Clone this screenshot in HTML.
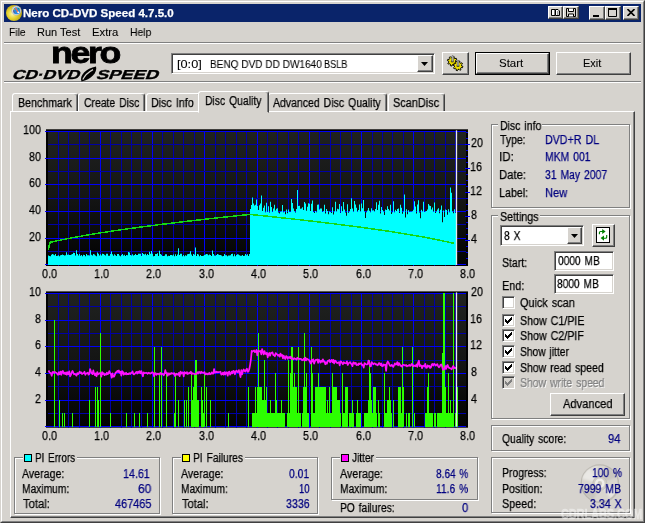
<!DOCTYPE html>
<html>
<head>
<meta charset="utf-8">
<title>Nero CD-DVD Speed 4.7.5.0</title>
<style>
html,body{margin:0;padding:0;}
body{width:645px;height:523px;overflow:hidden;background:#d6d3ce;font-family:"Liberation Sans",sans-serif;font-size:12.5px;color:#000;position:relative;}
.a{position:absolute;}
.t{position:absolute;white-space:nowrap;line-height:16px;height:16px;transform-origin:0 50%;z-index:4;will-change:transform;-webkit-text-stroke:0.25px;}
#frame{left:0;top:0;width:643px;height:521px;border:1px solid;border-color:#d6d3ce #404040 #404040 #d6d3ce;}
#frame2{left:1px;top:1px;width:641px;height:519px;border:1px solid;border-color:#fff #808080 #808080 #fff;}
#title{left:4px;top:4px;width:637px;height:18px;background:#0a246a;}
.cap{position:absolute;top:2px;width:16px;height:14px;background:#d6d3ce;border:1px solid;border-color:#fff #404040 #404040 #fff;box-shadow:inset -1px -1px 0 #808080;box-sizing:border-box;}
.etch{position:absolute;height:1px;background:#808080;border-bottom:1px solid #fff;}
.btn{position:absolute;background:#d6d3ce;border:1px solid;border-color:#fff #404040 #404040 #fff;box-shadow:inset -1px -1px 0 #808080;box-sizing:border-box;}
.sunk{position:absolute;background:#fff;border:1px solid;border-color:#808080 #fff #fff #808080;box-shadow:inset 1px 1px 0 #404040, inset -1px -1px 0 #d6d3ce;box-sizing:border-box;}
.grp{position:absolute;border:1px solid #808080;box-shadow:1px 1px 0 #fff, inset 1px 1px 0 #fff;box-sizing:border-box;}
.lg{position:absolute;background:#d6d3ce;height:13px;}
.tab{position:absolute;top:93px;height:19px;box-sizing:border-box;border:1px solid;border-color:#fff #404040 transparent #fff;border-radius:3px 3px 0 0;box-shadow:inset -1px 0 0 #808080;background:#d6d3ce;}
.tab.sel{top:91px;height:22px;z-index:3;}
.chk{position:absolute;width:13px;height:13px;background:#fff;border:1px solid;border-color:#808080 #fff #fff #808080;box-shadow:inset 1px 1px 0 #404040, inset -1px -1px 0 #d6d3ce;box-sizing:border-box;}
.chk svg{position:absolute;left:-1px;top:-1px;}
.sq{position:absolute;width:6px;height:6px;border:1px solid #000;}
</style>
</head>
<body>
<div class="a" id="frame"></div>
<div class="a" id="frame2"></div>

<!-- title bar -->
<div class="a" id="title">
  <svg class="a" style="left:1px;top:0px" width="20" height="18" viewBox="0 0 20 18">
    <defs><radialGradient id="dg" cx="40%" cy="55%" r="60%"><stop offset="0" stop-color="#fff6a8"/><stop offset="0.5" stop-color="#e6d430"/><stop offset="1" stop-color="#b8a010"/></radialGradient></defs>
    <circle cx="9" cy="9" r="8" fill="url(#dg)"/>
    <circle cx="11.4" cy="6.6" r="4.6" fill="#e4e6ee" stroke="#a8acb8" stroke-width="0.7"/>
    <circle cx="11.6" cy="6.7" r="3.5" fill="#2a8ce0"/>
    <path d="M13 3.6L14.8 5L13.6 5.6Z" fill="#209030"/>
    <path d="M8.4 5.6L9.6 8.8L8.8 8.4Z" fill="#b01010"/>
    <path d="M10.4 3.8L13.2 8.6" stroke="#ff7040" stroke-width="1.2"/>
    <circle cx="13.3" cy="8.3" r="0.9" fill="#fff"/>
    <circle cx="8.8" cy="5.3" r="0.6" fill="#ffe000"/>
  </svg>
  <div class="cap" style="left:544px;width:15px;height:13px"><svg class="a" style="left:1px;top:1px" width="11" height="9" viewBox="0 0 11 9"><path d="M1.5 1.5h3.5v6h-3.5zM5.5 1.5h2.5l1.5 1.5v4.5h-4z" fill="#fff" stroke="#000" stroke-width="1"/><path d="M7 4h1.5M7 6h1.5" stroke="#000" stroke-width="0.8"/></svg></div>
  <div class="cap" style="left:559px;width:16px;height:13px"><svg class="a" style="left:2px;top:1px" width="10" height="9" viewBox="0 0 10 9"><path d="M0.5 0.5h9v8h-9z" fill="#d6d3ce" stroke="#000" stroke-width="1"/><path d="M2.5 0.5v3h5v-3M2.5 8.5v-2.5h5v2.5" fill="#fff" stroke="#000" stroke-width="1"/></svg></div>
  <div class="cap" style="left:585px"><svg class="a" style="left:3px;top:8px" width="6" height="2"><rect width="6" height="2" fill="#000"/></svg></div>
  <div class="cap" style="left:601px"><svg class="a" style="left:2px;top:1px" width="9" height="9"><path d="M0.5 1h8v7.5h-8z" fill="none" stroke="#000" stroke-width="1"/><rect width="9" height="2" fill="#000"/></svg></div>
  <div class="cap" style="left:619px"><svg class="a" style="left:3px;top:2px" width="8" height="7" viewBox="0 0 8 7"><path d="M0.5 0L7.5 7M7.5 0L0.5 7" stroke="#000" stroke-width="1.6" fill="none"/></svg></div>
</div>

<div class="etch" style="left:4px;top:42px;width:637px"></div>
<div class="etch" style="left:4px;top:81px;width:637px"></div>

<!-- logo -->
<div class="a" id="nero" style="left:51px;top:37.7px;font-size:30px;font-weight:bold;line-height:30px;height:30px;letter-spacing:-2px;-webkit-text-stroke:0.8px #000;white-space:nowrap;transform:scaleX(1.19);transform-origin:0 0;will-change:transform;">nero</div>
<svg class="a" style="left:12px;top:66px;will-change:transform" width="150" height="16" viewBox="0 0 150 16">
  <g transform="skewX(-22)" font-family="Liberation Sans, sans-serif" font-weight="bold" font-size="13" fill="#000" stroke="#000" stroke-width="0.35">
    <text x="4.7" y="13.1" textLength="67.5" lengthAdjust="spacingAndGlyphs">CD·DVD</text>
    <text x="88.9" y="13.1" textLength="62" lengthAdjust="spacingAndGlyphs">SPEED</text>
  </g>
  <path d="M69.5 15.4C67 10 74 2.5 84 0.6C85.7 6.5 79 14 69.5 15.4Z" fill="#000"/>
  <path d="M70.8 13.6C72.5 10 76.5 6 81 3.6" stroke="#d6d3ce" stroke-width="1.2" fill="none"/>
</svg>

<!-- drive combo -->
<div class="sunk" style="left:171px;top:53px;width:264px;height:21px"></div>
<div class="btn" style="left:417px;top:55px;width:16px;height:17px"></div>
<svg class="a" style="left:421px;top:62px" width="7" height="4"><path d="M0 0H7L3.5 4Z" fill="#000"/></svg>

<!-- gear button -->
<div class="btn" style="left:442px;top:52px;width:27px;height:23px"></div>
<svg class="a" style="left:444px;top:53px" width="24" height="21" viewBox="0 0 24 21">
  <path d="M11.9 8.2L13.2 8.8L12.8 10.1L11.4 10.0L10.8 10.7L11.3 12.0L10.2 12.7L9.3 11.7L8.3 11.8L7.7 13.1L6.4 12.7L6.5 11.3L5.8 10.7L4.5 11.2L3.8 10.1L4.8 9.2L4.7 8.2L3.4 7.6L3.8 6.3L5.2 6.4L5.8 5.7L5.3 4.4L6.4 3.7L7.3 4.7L8.3 4.6L8.9 3.3L10.2 3.7L10.1 5.1L10.8 5.7L12.1 5.2L12.8 6.3L11.8 7.2Z" fill="#f0e000" stroke="#000" stroke-width="1" stroke-linejoin="round"/>
  <path d="M17.6 12.8L18.9 13.4L18.5 14.7L17.1 14.6L16.5 15.3L17.0 16.6L15.9 17.3L15.0 16.3L14.0 16.4L13.4 17.7L12.1 17.3L12.2 15.9L11.5 15.3L10.2 15.8L9.5 14.7L10.5 13.8L10.4 12.8L9.1 12.2L9.5 10.9L10.9 11.0L11.5 10.3L11.0 9.0L12.1 8.3L13.0 9.3L14.0 9.2L14.6 7.9L15.9 8.3L15.8 9.7L16.5 10.3L17.8 9.8L18.5 10.9L17.5 11.8Z" fill="#f0e000" stroke="#000" stroke-width="1" stroke-linejoin="round"/>
  <ellipse cx="8.3" cy="8.4" rx="1.6" ry="1.1" fill="#504800"/>
  <ellipse cx="14.0" cy="13.0" rx="1.6" ry="1.1" fill="#504800"/>
  <path d="M7.7 8.4V3.2L8.6 2.2L9.5 3.2V8.4Z" fill="#b0b0b0" stroke="#505050" stroke-width="0.5"/>
  <path d="M13.1 13.0V8.0L14.0 7.0L14.9 8.0V13.0Z" fill="#b0b0b0" stroke="#505050" stroke-width="0.5"/>
</svg>

<!-- start / exit -->
<div class="a" style="left:475px;top:52px;width:75px;height:23px;background:#000"></div>
<div class="btn" style="left:476px;top:53px;width:73px;height:21px"></div>
<div class="btn" style="left:556px;top:52px;width:75px;height:23px"></div>

<!-- tabs -->
<div class="tab" style="left:12px;width:66px"></div>
<div class="tab" style="left:78px;width:67px"></div>
<div class="tab" style="left:146px;width:55px"></div>
<div class="tab" style="left:268px;width:119px"></div>
<div class="tab" style="left:388px;width:57px"></div>
<!-- tab panel -->
<div class="a" style="left:10px;top:111px;width:623px;height:405px;border:1px solid;border-color:#fff #404040 #404040 #fff;box-shadow:inset -1px -1px 0 #808080;box-sizing:content-box"></div>
<div class="tab sel" style="left:198px;width:71px"></div>

<svg class="a" style="left:0;top:0" width="645" height="523" viewBox="0 0 645 523" shape-rendering="auto">
<defs><linearGradient id="c1g" x1="0" y1="0" x2="0" y2="1"><stop offset="0" stop-color="#202220"/><stop offset="0.5" stop-color="#141514"/><stop offset="1" stop-color="#020202"/></linearGradient></defs>
<rect x="46" y="129.3" width="422" height="136.7" fill="#000"/>
<rect x="48" y="131.3" width="418" height="133.7" fill="url(#c1g)"/>
<g shape-rendering="crispEdges">
<line x1="58.5" y1="131.3" x2="58.5" y2="266.0" stroke="#0000a6" stroke-width="1"/>
<line x1="68.5" y1="131.3" x2="68.5" y2="266.0" stroke="#0000a6" stroke-width="1"/>
<line x1="79.5" y1="131.3" x2="79.5" y2="266.0" stroke="#0000a6" stroke-width="1"/>
<line x1="89.5" y1="131.3" x2="89.5" y2="266.0" stroke="#0000a6" stroke-width="1"/>
<line x1="100.5" y1="131.3" x2="100.5" y2="266.0" stroke="#0000f8" stroke-width="1"/>
<line x1="110.5" y1="131.3" x2="110.5" y2="266.0" stroke="#0000a6" stroke-width="1"/>
<line x1="121.5" y1="131.3" x2="121.5" y2="266.0" stroke="#0000a6" stroke-width="1"/>
<line x1="131.5" y1="131.3" x2="131.5" y2="266.0" stroke="#0000a6" stroke-width="1"/>
<line x1="141.5" y1="131.3" x2="141.5" y2="266.0" stroke="#0000a6" stroke-width="1"/>
<line x1="152.5" y1="131.3" x2="152.5" y2="266.0" stroke="#0000f8" stroke-width="1"/>
<line x1="162.5" y1="131.3" x2="162.5" y2="266.0" stroke="#0000a6" stroke-width="1"/>
<line x1="173.5" y1="131.3" x2="173.5" y2="266.0" stroke="#0000a6" stroke-width="1"/>
<line x1="183.5" y1="131.3" x2="183.5" y2="266.0" stroke="#0000a6" stroke-width="1"/>
<line x1="194.5" y1="131.3" x2="194.5" y2="266.0" stroke="#0000a6" stroke-width="1"/>
<line x1="204.5" y1="131.3" x2="204.5" y2="266.0" stroke="#0000f8" stroke-width="1"/>
<line x1="215.5" y1="131.3" x2="215.5" y2="266.0" stroke="#0000a6" stroke-width="1"/>
<line x1="225.5" y1="131.3" x2="225.5" y2="266.0" stroke="#0000a6" stroke-width="1"/>
<line x1="236.5" y1="131.3" x2="236.5" y2="266.0" stroke="#0000a6" stroke-width="1"/>
<line x1="246.5" y1="131.3" x2="246.5" y2="266.0" stroke="#0000a6" stroke-width="1"/>
<line x1="257.5" y1="131.3" x2="257.5" y2="266.0" stroke="#0000f8" stroke-width="1"/>
<line x1="267.5" y1="131.3" x2="267.5" y2="266.0" stroke="#0000a6" stroke-width="1"/>
<line x1="277.5" y1="131.3" x2="277.5" y2="266.0" stroke="#0000a6" stroke-width="1"/>
<line x1="288.5" y1="131.3" x2="288.5" y2="266.0" stroke="#0000a6" stroke-width="1"/>
<line x1="298.5" y1="131.3" x2="298.5" y2="266.0" stroke="#0000a6" stroke-width="1"/>
<line x1="309.5" y1="131.3" x2="309.5" y2="266.0" stroke="#0000f8" stroke-width="1"/>
<line x1="319.5" y1="131.3" x2="319.5" y2="266.0" stroke="#0000a6" stroke-width="1"/>
<line x1="330.5" y1="131.3" x2="330.5" y2="266.0" stroke="#0000a6" stroke-width="1"/>
<line x1="340.5" y1="131.3" x2="340.5" y2="266.0" stroke="#0000a6" stroke-width="1"/>
<line x1="351.5" y1="131.3" x2="351.5" y2="266.0" stroke="#0000a6" stroke-width="1"/>
<line x1="361.5" y1="131.3" x2="361.5" y2="266.0" stroke="#0000f8" stroke-width="1"/>
<line x1="372.5" y1="131.3" x2="372.5" y2="266.0" stroke="#0000a6" stroke-width="1"/>
<line x1="382.5" y1="131.3" x2="382.5" y2="266.0" stroke="#0000a6" stroke-width="1"/>
<line x1="392.5" y1="131.3" x2="392.5" y2="266.0" stroke="#0000a6" stroke-width="1"/>
<line x1="403.5" y1="131.3" x2="403.5" y2="266.0" stroke="#0000a6" stroke-width="1"/>
<line x1="413.5" y1="131.3" x2="413.5" y2="266.0" stroke="#0000f8" stroke-width="1"/>
<line x1="424.5" y1="131.3" x2="424.5" y2="266.0" stroke="#0000a6" stroke-width="1"/>
<line x1="434.5" y1="131.3" x2="434.5" y2="266.0" stroke="#0000a6" stroke-width="1"/>
<line x1="445.5" y1="131.3" x2="445.5" y2="266.0" stroke="#0000a6" stroke-width="1"/>
<line x1="455.5" y1="131.3" x2="455.5" y2="266.0" stroke="#0000a6" stroke-width="1"/>
<line x1="45" y1="131.5" x2="466" y2="131.5" stroke="#0000f8" stroke-width="1"/>
<line x1="48" y1="144.5" x2="466" y2="144.5" stroke="#0000a6" stroke-width="1"/>
<line x1="45" y1="158.5" x2="466" y2="158.5" stroke="#0000f8" stroke-width="1"/>
<line x1="48" y1="171.5" x2="466" y2="171.5" stroke="#0000a6" stroke-width="1"/>
<line x1="45" y1="184.5" x2="466" y2="184.5" stroke="#0000f8" stroke-width="1"/>
<line x1="48" y1="198.5" x2="466" y2="198.5" stroke="#0000a6" stroke-width="1"/>
<line x1="45" y1="211.5" x2="466" y2="211.5" stroke="#0000f8" stroke-width="1"/>
<line x1="48" y1="224.5" x2="466" y2="224.5" stroke="#0000a6" stroke-width="1"/>
<line x1="45" y1="238.5" x2="466" y2="238.5" stroke="#0000f8" stroke-width="1"/>
<line x1="48" y1="251.5" x2="466" y2="251.5" stroke="#0000a6" stroke-width="1"/>
<line x1="45" y1="264.5" x2="466" y2="264.5" stroke="#0000f8" stroke-width="1"/>
</g>
<path d="M48 265.0L48.0 255.4L49.0 255.4L49.0 256.1L50.0 256.1L50.0 256.2L51.0 256.2L51.0 254.8L52.0 254.8L52.0 254.1L53.0 254.1L53.0 254.6L54.0 254.6L54.0 255.2L55.0 255.2L55.0 254.0L56.0 254.0L56.0 256.0L57.0 256.0L57.0 255.8L58.0 255.8L58.0 255.3L59.0 255.3L59.0 256.2L60.0 256.2L60.0 255.2L61.0 255.2L61.0 255.1L62.0 255.1L62.0 254.4L63.0 254.4L63.0 254.9L64.0 254.9L64.0 255.5L65.0 255.5L65.0 255.2L66.0 255.2L66.0 252.3L67.0 252.3L67.0 254.8L68.0 254.8L68.0 254.5L69.0 254.5L69.0 255.1L70.0 255.1L70.0 255.0L71.0 255.0L71.0 254.4L72.0 254.4L72.0 254.1L73.0 254.1L73.0 252.7L74.0 252.7L74.0 252.9L75.0 252.9L75.0 255.6L76.0 255.6L76.0 250.3L77.0 250.3L77.0 253.9L78.0 253.9L78.0 255.6L79.0 255.6L79.0 253.9L80.0 253.9L80.0 255.8L81.0 255.8L81.0 255.0L82.0 255.0L82.0 256.3L83.0 256.3L83.0 254.8L84.0 254.8L84.0 254.9L85.0 254.9L85.0 256.2L86.0 256.2L86.0 254.0L87.0 254.0L87.0 255.2L88.0 255.2L88.0 255.3L89.0 255.3L89.0 255.4L90.0 255.4L90.0 250.2L91.0 250.2L91.0 254.7L92.0 254.7L92.0 255.4L93.0 255.4L93.0 254.0L94.0 254.0L94.0 254.6L95.0 254.6L95.0 255.6L96.0 255.6L96.0 256.2L97.0 256.2L97.0 252.4L98.0 252.4L98.0 253.7L99.0 253.7L99.0 255.6L100.0 255.6L100.0 254.2L101.0 254.2L101.0 255.4L102.0 255.4L102.0 253.7L103.0 253.7L103.0 254.1L104.0 254.1L104.0 254.7L105.0 254.7L105.0 255.6L106.0 255.6L106.0 253.8L107.0 253.8L107.0 253.7L108.0 253.7L108.0 255.7L109.0 255.7L109.0 255.8L110.0 255.8L110.0 254.1L111.0 254.1L111.0 251.5L112.0 251.5L112.0 254.2L113.0 254.2L113.0 255.8L114.0 255.8L114.0 254.2L115.0 254.2L115.0 255.2L116.0 255.2L116.0 255.9L117.0 255.9L117.0 253.9L118.0 253.9L118.0 254.1L119.0 254.1L119.0 255.4L120.0 255.4L120.0 256.3L121.0 256.3L121.0 254.9L122.0 254.9L122.0 254.0L123.0 254.0L123.0 255.6L124.0 255.6L124.0 254.7L125.0 254.7L125.0 256.0L126.0 256.0L126.0 255.1L127.0 255.1L127.0 255.2L128.0 255.2L128.0 251.9L129.0 251.9L129.0 252.6L130.0 252.6L130.0 255.0L131.0 255.0L131.0 255.4L132.0 255.4L132.0 254.2L133.0 254.2L133.0 255.6L134.0 255.6L134.0 255.0L135.0 255.0L135.0 253.9L136.0 253.9L136.0 255.0L137.0 255.0L137.0 255.1L138.0 255.1L138.0 253.8L139.0 253.8L139.0 253.8L140.0 253.8L140.0 253.8L141.0 253.8L141.0 256.0L142.0 256.0L142.0 253.0L143.0 253.0L143.0 253.9L144.0 253.9L144.0 254.5L145.0 254.5L145.0 253.7L146.0 253.7L146.0 255.2L147.0 255.2L147.0 254.1L148.0 254.1L148.0 254.9L149.0 254.9L149.0 251.8L150.0 251.8L150.0 253.8L151.0 253.8L151.0 251.0L152.0 251.0L152.0 253.7L153.0 253.7L153.0 256.2L154.0 256.2L154.0 256.0L155.0 256.0L155.0 254.1L156.0 254.1L156.0 253.9L157.0 253.9L157.0 253.3L158.0 253.3L158.0 256.1L159.0 256.1L159.0 250.7L160.0 250.7L160.0 254.0L161.0 254.0L161.0 254.8L162.0 254.8L162.0 256.0L163.0 256.0L163.0 256.0L164.0 256.0L164.0 255.8L165.0 255.8L165.0 254.3L166.0 254.3L166.0 254.2L167.0 254.2L167.0 256.3L168.0 256.3L168.0 255.8L169.0 255.8L169.0 256.0L170.0 256.0L170.0 255.0L171.0 255.0L171.0 255.0L172.0 255.0L172.0 255.4L173.0 255.4L173.0 254.6L174.0 254.6L174.0 256.2L175.0 256.2L175.0 254.3L176.0 254.3L176.0 256.1L177.0 256.1L177.0 254.5L178.0 254.5L178.0 248.3L179.0 248.3L179.0 255.1L180.0 255.1L180.0 253.7L181.0 253.7L181.0 253.7L182.0 253.7L182.0 256.3L183.0 256.3L183.0 255.0L184.0 255.0L184.0 256.3L185.0 256.3L185.0 255.2L186.0 255.2L186.0 255.7L187.0 255.7L187.0 254.3L188.0 254.3L188.0 254.0L189.0 254.0L189.0 253.7L190.0 253.7L190.0 251.2L191.0 251.2L191.0 254.6L192.0 254.6L192.0 255.9L193.0 255.9L193.0 254.1L194.0 254.1L194.0 254.7L195.0 254.7L195.0 247.6L196.0 247.6L196.0 256.0L197.0 256.0L197.0 254.1L198.0 254.1L198.0 254.6L199.0 254.6L199.0 256.3L200.0 256.3L200.0 255.0L201.0 255.0L201.0 256.1L202.0 256.1L202.0 256.1L203.0 256.1L203.0 255.8L204.0 255.8L204.0 255.0L205.0 255.0L205.0 254.5L206.0 254.5L206.0 254.0L207.0 254.0L207.0 254.3L208.0 254.3L208.0 255.2L209.0 255.2L209.0 254.5L210.0 254.5L210.0 254.9L211.0 254.9L211.0 256.0L212.0 256.0L212.0 250.6L213.0 250.6L213.0 254.1L214.0 254.1L214.0 255.6L215.0 255.6L215.0 255.7L216.0 255.7L216.0 254.9L217.0 254.9L217.0 254.1L218.0 254.1L218.0 254.4L219.0 254.4L219.0 255.0L220.0 255.0L220.0 255.1L221.0 255.1L221.0 255.4L222.0 255.4L222.0 256.3L223.0 256.3L223.0 256.0L224.0 256.0L224.0 253.9L225.0 253.9L225.0 255.3L226.0 255.3L226.0 255.3L227.0 255.3L227.0 256.2L228.0 256.2L228.0 255.5L229.0 255.5L229.0 255.6L230.0 255.6L230.0 255.3L231.0 255.3L231.0 254.1L232.0 254.1L232.0 253.8L233.0 253.8L233.0 256.2L234.0 256.2L234.0 254.3L235.0 254.3L235.0 256.2L236.0 256.2L236.0 255.0L237.0 255.0L237.0 254.3L238.0 254.3L238.0 254.6L239.0 254.6L239.0 255.3L240.0 255.3L240.0 255.8L241.0 255.8L241.0 255.7L242.0 255.7L242.0 255.1L243.0 255.1L243.0 256.1L244.0 256.1L244.0 255.7L245.0 255.7L245.0 253.9L246.0 253.9L246.0 255.2L247.0 255.2L247.0 254.3L248.0 254.3L248.0 256.0L249.0 256.0L249.0 254.0L250.0 254.0L250.0 208.9L251.0 208.9L251.0 205.1L252.0 205.1L252.0 197.4L253.0 197.4L253.0 203.5L254.0 203.5L254.0 205.6L255.0 205.6L255.0 204.7L256.0 204.7L256.0 199.5L257.0 199.5L257.0 206.1L258.0 206.1L258.0 210.0L259.0 210.0L259.0 205.3L260.0 205.3L260.0 203.5L261.0 203.5L261.0 195.5L262.0 195.5L262.0 211.0L263.0 211.0L263.0 207.7L264.0 207.7L264.0 205.5L265.0 205.5L265.0 212.2L266.0 212.2L266.0 202.7L267.0 202.7L267.0 212.1L268.0 212.1L268.0 206.3L269.0 206.3L269.0 212.5L270.0 212.5L270.0 201.7L271.0 201.7L271.0 207.1L272.0 207.1L272.0 211.9L273.0 211.9L273.0 208.6L274.0 208.6L274.0 204.8L275.0 204.8L275.0 210.5L276.0 210.5L276.0 208.7L277.0 208.7L277.0 208.2L278.0 208.2L278.0 212.5L279.0 212.5L279.0 213.4L280.0 213.4L280.0 211.8L281.0 211.8L281.0 211.6L282.0 211.6L282.0 205.0L283.0 205.0L283.0 212.3L284.0 212.3L284.0 211.5L285.0 211.5L285.0 214.3L286.0 214.3L286.0 209.4L287.0 209.4L287.0 213.2L288.0 213.2L288.0 209.5L289.0 209.5L289.0 212.1L290.0 212.1L290.0 212.1L291.0 212.1L291.0 198.9L292.0 198.9L292.0 203.1L293.0 203.1L293.0 208.4L294.0 208.4L294.0 211.2L295.0 211.2L295.0 212.5L296.0 212.5L296.0 209.1L297.0 209.1L297.0 190.1L298.0 190.1L298.0 206.1L299.0 206.1L299.0 205.8L300.0 205.8L300.0 208.8L301.0 208.8L301.0 208.4L302.0 208.4L302.0 207.2L303.0 207.2L303.0 209.9L304.0 209.9L304.0 202.1L305.0 202.1L305.0 203.6L306.0 203.6L306.0 210.8L307.0 210.8L307.0 206.7L308.0 206.7L308.0 203.2L309.0 203.2L309.0 203.8L310.0 203.8L310.0 211.0L311.0 211.0L311.0 203.8L312.0 203.8L312.0 200.4L313.0 200.4L313.0 212.1L314.0 212.1L314.0 213.0L315.0 213.0L315.0 211.0L316.0 211.0L316.0 212.2L317.0 212.2L317.0 204.8L318.0 204.8L318.0 204.4L319.0 204.4L319.0 209.5L320.0 209.5L320.0 208.6L321.0 208.6L321.0 208.5L322.0 208.5L322.0 211.9L323.0 211.9L323.0 211.3L324.0 211.3L324.0 204.8L325.0 204.8L325.0 213.5L326.0 213.5L326.0 209.1L327.0 209.1L327.0 210.9L328.0 210.9L328.0 214.3L329.0 214.3L329.0 211.5L330.0 211.5L330.0 212.0L331.0 212.0L331.0 212.9L332.0 212.9L332.0 207.2L333.0 207.2L333.0 214.5L334.0 214.5L334.0 211.5L335.0 211.5L335.0 201.8L336.0 201.8L336.0 211.4L337.0 211.4L337.0 208.8L338.0 208.8L338.0 209.2L339.0 209.2L339.0 204.0L340.0 204.0L340.0 212.9L341.0 212.9L341.0 206.2L342.0 206.2L342.0 211.2L343.0 211.2L343.0 202.1L344.0 202.1L344.0 209.4L345.0 209.4L345.0 212.6L346.0 212.6L346.0 215.8L347.0 215.8L347.0 204.3L348.0 204.3L348.0 212.7L349.0 212.7L349.0 211.5L350.0 211.5L350.0 208.9L351.0 208.9L351.0 198.2L352.0 198.2L352.0 208.4L353.0 208.4L353.0 211.7L354.0 211.7L354.0 201.1L355.0 201.1L355.0 204.5L356.0 204.5L356.0 207.7L357.0 207.7L357.0 211.8L358.0 211.8L358.0 209.9L359.0 209.9L359.0 204.4L360.0 204.4L360.0 211.6L361.0 211.6L361.0 203.5L362.0 203.5L362.0 208.2L363.0 208.2L363.0 200.0L364.0 200.0L364.0 211.6L365.0 211.6L365.0 218.1L366.0 218.1L366.0 212.2L367.0 212.2L367.0 210.4L368.0 210.4L368.0 208.0L369.0 208.0L369.0 210.8L370.0 210.8L370.0 212.3L371.0 212.3L371.0 208.3L372.0 208.3L372.0 210.4L373.0 210.4L373.0 210.2L374.0 210.2L374.0 211.4L375.0 211.4L375.0 208.9L376.0 208.9L376.0 202.3L377.0 202.3L377.0 210.1L378.0 210.1L378.0 204.7L379.0 204.7L379.0 200.8L380.0 200.8L380.0 213.5L381.0 213.5L381.0 207.1L382.0 207.1L382.0 210.1L383.0 210.1L383.0 211.4L384.0 211.4L384.0 215.0L385.0 215.0L385.0 209.5L386.0 209.5L386.0 210.1L387.0 210.1L387.0 206.3L388.0 206.3L388.0 209.0L389.0 209.0L389.0 210.6L390.0 210.6L390.0 204.7L391.0 204.7L391.0 214.1L392.0 214.1L392.0 212.3L393.0 212.3L393.0 201.3L394.0 201.3L394.0 212.2L395.0 212.2L395.0 209.8L396.0 209.8L396.0 211.0L397.0 211.0L397.0 208.9L398.0 208.9L398.0 208.5L399.0 208.5L399.0 213.1L400.0 213.1L400.0 204.7L401.0 204.7L401.0 207.7L402.0 207.7L402.0 213.7L403.0 213.7L403.0 211.6L404.0 211.6L404.0 194.5L405.0 194.5L405.0 217.6L406.0 217.6L406.0 209.2L407.0 209.2L407.0 214.3L408.0 214.3L408.0 210.2L409.0 210.2L409.0 212.0L410.0 212.0L410.0 211.8L411.0 211.8L411.0 211.7L412.0 211.7L412.0 211.2L413.0 211.2L413.0 209.8L414.0 209.8L414.0 201.2L415.0 201.2L415.0 206.4L416.0 206.4L416.0 213.5L417.0 213.5L417.0 204.6L418.0 204.6L418.0 200.2L419.0 200.2L419.0 212.4L420.0 212.4L420.0 218.2L421.0 218.2L421.0 209.8L422.0 209.8L422.0 211.6L423.0 211.6L423.0 201.8L424.0 201.8L424.0 212.1L425.0 212.1L425.0 211.5L426.0 211.5L426.0 211.1L427.0 211.1L427.0 209.5L428.0 209.5L428.0 203.9L429.0 203.9L429.0 205.5L430.0 205.5L430.0 206.1L431.0 206.1L431.0 209.4L432.0 209.4L432.0 207.6L433.0 207.6L433.0 211.8L434.0 211.8L434.0 202.6L435.0 202.6L435.0 213.0L436.0 213.0L436.0 211.5L437.0 211.5L437.0 209.6L438.0 209.6L438.0 208.2L439.0 208.2L439.0 213.3L440.0 213.3L440.0 209.8L441.0 209.8L441.0 205.4L442.0 205.4L442.0 222.2L443.0 222.2L443.0 210.5L444.0 210.5L444.0 216.9L445.0 216.9L445.0 209.4L446.0 209.4L446.0 209.9L447.0 209.9L447.0 214.7L448.0 214.7L448.0 209.3L449.0 209.3L449.0 212.2L450.0 212.2L450.0 187.5L451.0 187.5L451.0 192.8L452.0 192.8L452.0 211.4L453.0 211.4L453.0 213.3L454.0 213.3L454.0 209.3L455.0 209.3L455.0 213.0L456.0 213.0L456.0 265.0Z" fill="#00ffff"/>
<path d="M48.6 249.6L49.0 246.3L49.9 243.6L50.4 242.2L52.9 241.7L55.4 241.1L57.9 240.6L60.4 240.1L62.9 239.6L65.4 239.1L67.9 238.6L70.4 238.1L72.9 237.6L75.4 237.2L77.9 236.7L80.4 236.3L82.9 235.8L85.4 235.4L87.9 235.0L90.4 234.6L92.9 234.2L95.4 233.7L97.9 233.3L100.4 232.9L102.9 232.5L105.4 232.2L107.9 231.8L110.4 231.4L112.8 231.0L115.3 230.6L117.8 230.3L120.3 229.9L122.8 229.5L125.3 229.2L127.8 228.8L130.3 228.5L132.8 228.1L135.3 227.8L137.8 227.5L140.3 227.1L142.8 226.8L145.3 226.5L147.8 226.1L150.3 225.8L152.8 225.5L155.3 225.2L157.8 224.8L160.3 224.5L162.8 224.2L165.3 223.9L167.8 223.6L170.3 223.3L172.8 223.0L175.3 222.7L177.8 222.4L180.3 222.1L182.8 221.8L185.3 221.5L187.8 221.2L190.3 220.9L192.8 220.6L195.3 220.3L197.8 220.1L200.3 219.8L202.8 219.5L205.2 219.2L207.7 218.9L210.2 218.7L212.7 218.4L215.2 218.1L217.7 217.8L220.2 217.6L222.7 217.3L225.2 217.0L227.7 216.8L230.2 216.5L232.7 216.3L235.2 216.0L237.7 215.7L240.2 215.5L242.7 215.2L245.2 215.0L247.7 214.7L250.2 214.5L250.2 214.5L252.7 214.7L255.3 215.0L257.8 215.2L260.4 215.5L262.9 215.8L265.5 216.0L268.0 216.3L270.5 216.6L273.1 216.8L275.6 217.1L278.2 217.4L280.7 217.7L283.3 217.9L285.8 218.2L288.3 218.5L290.9 218.8L293.4 219.1L296.0 219.3L298.5 219.6L301.1 219.9L303.6 220.2L306.1 220.5L308.7 220.8L311.2 221.1L313.8 221.4L316.3 221.7L318.9 222.0L321.4 222.3L324.0 222.6L326.5 222.9L329.0 223.2L331.6 223.5L334.1 223.8L336.7 224.2L339.2 224.5L341.8 224.8L344.3 225.1L346.8 225.5L349.4 225.8L351.9 226.1L354.5 226.5L357.0 226.8L359.6 227.1L362.1 227.5L364.6 227.8L367.2 228.2L369.7 228.5L372.3 228.9L374.8 229.3L377.4 229.6L379.9 230.0L382.4 230.4L385.0 230.8L387.5 231.1L390.1 231.5L392.6 231.9L395.2 232.3L397.7 232.7L400.2 233.1L402.8 233.5L405.3 233.9L407.9 234.4L410.4 234.8L413.0 235.2L415.5 235.7L418.0 236.1L420.6 236.6L423.1 237.0L425.7 237.5L428.2 238.0L430.8 238.5L433.3 239.0L435.8 239.5L438.4 240.0L440.9 240.5L443.5 241.1L446.0 241.6L448.6 242.2L451.1 242.7L453.6 243.3" fill="none" stroke="#14d814" stroke-width="1.5" shape-rendering="crispEdges"/>
<line x1="456.5" y1="130.3" x2="456.5" y2="265.0" stroke="#e8e8e8" stroke-width="1.3"/>
<g shape-rendering="crispEdges">
<line x1="466" y1="258.30" x2="468.3" y2="258.30" stroke="#0000e0" stroke-width="1"/>
<line x1="466" y1="252.30" x2="468.3" y2="252.30" stroke="#0000e0" stroke-width="1"/>
<line x1="466" y1="246.30" x2="468.3" y2="246.30" stroke="#0000e0" stroke-width="1"/>
<line x1="465" y1="240.30" x2="470" y2="240.30" stroke="#0000ff" stroke-width="1"/>
<line x1="466" y1="234.30" x2="468.3" y2="234.30" stroke="#0000e0" stroke-width="1"/>
<line x1="466" y1="228.30" x2="468.3" y2="228.30" stroke="#0000e0" stroke-width="1"/>
<line x1="466" y1="222.30" x2="468.3" y2="222.30" stroke="#0000e0" stroke-width="1"/>
<line x1="465" y1="216.30" x2="470" y2="216.30" stroke="#0000ff" stroke-width="1"/>
<line x1="466" y1="210.30" x2="468.3" y2="210.30" stroke="#0000e0" stroke-width="1"/>
<line x1="466" y1="204.30" x2="468.3" y2="204.30" stroke="#0000e0" stroke-width="1"/>
<line x1="466" y1="198.30" x2="468.3" y2="198.30" stroke="#0000e0" stroke-width="1"/>
<line x1="465" y1="192.30" x2="470" y2="192.30" stroke="#0000ff" stroke-width="1"/>
<line x1="466" y1="186.30" x2="468.3" y2="186.30" stroke="#0000e0" stroke-width="1"/>
<line x1="466" y1="180.30" x2="468.3" y2="180.30" stroke="#0000e0" stroke-width="1"/>
<line x1="466" y1="174.30" x2="468.3" y2="174.30" stroke="#0000e0" stroke-width="1"/>
<line x1="465" y1="168.30" x2="470" y2="168.30" stroke="#0000ff" stroke-width="1"/>
<line x1="466" y1="162.30" x2="468.3" y2="162.30" stroke="#0000e0" stroke-width="1"/>
<line x1="466" y1="156.30" x2="468.3" y2="156.30" stroke="#0000e0" stroke-width="1"/>
<line x1="466" y1="150.30" x2="468.3" y2="150.30" stroke="#0000e0" stroke-width="1"/>
<line x1="465" y1="144.30" x2="470" y2="144.30" stroke="#0000ff" stroke-width="1"/>
<line x1="466" y1="138.30" x2="468.3" y2="138.30" stroke="#0000e0" stroke-width="1"/>
<line x1="466" y1="132.30" x2="468.3" y2="132.30" stroke="#0000e0" stroke-width="1"/>
</g>
<defs><linearGradient id="c2g" x1="0" y1="0" x2="0" y2="1"><stop offset="0" stop-color="#202220"/><stop offset="0.5" stop-color="#141514"/><stop offset="1" stop-color="#020202"/></linearGradient></defs>
<rect x="46" y="291.4" width="422" height="136.3" fill="#000"/>
<rect x="48" y="293.4" width="418" height="133.3" fill="url(#c2g)"/>
<g shape-rendering="crispEdges">
<line x1="58.5" y1="293.4" x2="58.5" y2="427.7" stroke="#0000a6" stroke-width="1"/>
<line x1="68.5" y1="293.4" x2="68.5" y2="427.7" stroke="#0000a6" stroke-width="1"/>
<line x1="79.5" y1="293.4" x2="79.5" y2="427.7" stroke="#0000a6" stroke-width="1"/>
<line x1="89.5" y1="293.4" x2="89.5" y2="427.7" stroke="#0000a6" stroke-width="1"/>
<line x1="100.5" y1="293.4" x2="100.5" y2="427.7" stroke="#0000f8" stroke-width="1"/>
<line x1="110.5" y1="293.4" x2="110.5" y2="427.7" stroke="#0000a6" stroke-width="1"/>
<line x1="121.5" y1="293.4" x2="121.5" y2="427.7" stroke="#0000a6" stroke-width="1"/>
<line x1="131.5" y1="293.4" x2="131.5" y2="427.7" stroke="#0000a6" stroke-width="1"/>
<line x1="141.5" y1="293.4" x2="141.5" y2="427.7" stroke="#0000a6" stroke-width="1"/>
<line x1="152.5" y1="293.4" x2="152.5" y2="427.7" stroke="#0000f8" stroke-width="1"/>
<line x1="162.5" y1="293.4" x2="162.5" y2="427.7" stroke="#0000a6" stroke-width="1"/>
<line x1="173.5" y1="293.4" x2="173.5" y2="427.7" stroke="#0000a6" stroke-width="1"/>
<line x1="183.5" y1="293.4" x2="183.5" y2="427.7" stroke="#0000a6" stroke-width="1"/>
<line x1="194.5" y1="293.4" x2="194.5" y2="427.7" stroke="#0000a6" stroke-width="1"/>
<line x1="204.5" y1="293.4" x2="204.5" y2="427.7" stroke="#0000f8" stroke-width="1"/>
<line x1="215.5" y1="293.4" x2="215.5" y2="427.7" stroke="#0000a6" stroke-width="1"/>
<line x1="225.5" y1="293.4" x2="225.5" y2="427.7" stroke="#0000a6" stroke-width="1"/>
<line x1="236.5" y1="293.4" x2="236.5" y2="427.7" stroke="#0000a6" stroke-width="1"/>
<line x1="246.5" y1="293.4" x2="246.5" y2="427.7" stroke="#0000a6" stroke-width="1"/>
<line x1="257.5" y1="293.4" x2="257.5" y2="427.7" stroke="#0000f8" stroke-width="1"/>
<line x1="267.5" y1="293.4" x2="267.5" y2="427.7" stroke="#0000a6" stroke-width="1"/>
<line x1="277.5" y1="293.4" x2="277.5" y2="427.7" stroke="#0000a6" stroke-width="1"/>
<line x1="288.5" y1="293.4" x2="288.5" y2="427.7" stroke="#0000a6" stroke-width="1"/>
<line x1="298.5" y1="293.4" x2="298.5" y2="427.7" stroke="#0000a6" stroke-width="1"/>
<line x1="309.5" y1="293.4" x2="309.5" y2="427.7" stroke="#0000f8" stroke-width="1"/>
<line x1="319.5" y1="293.4" x2="319.5" y2="427.7" stroke="#0000a6" stroke-width="1"/>
<line x1="330.5" y1="293.4" x2="330.5" y2="427.7" stroke="#0000a6" stroke-width="1"/>
<line x1="340.5" y1="293.4" x2="340.5" y2="427.7" stroke="#0000a6" stroke-width="1"/>
<line x1="351.5" y1="293.4" x2="351.5" y2="427.7" stroke="#0000a6" stroke-width="1"/>
<line x1="361.5" y1="293.4" x2="361.5" y2="427.7" stroke="#0000f8" stroke-width="1"/>
<line x1="372.5" y1="293.4" x2="372.5" y2="427.7" stroke="#0000a6" stroke-width="1"/>
<line x1="382.5" y1="293.4" x2="382.5" y2="427.7" stroke="#0000a6" stroke-width="1"/>
<line x1="392.5" y1="293.4" x2="392.5" y2="427.7" stroke="#0000a6" stroke-width="1"/>
<line x1="403.5" y1="293.4" x2="403.5" y2="427.7" stroke="#0000a6" stroke-width="1"/>
<line x1="413.5" y1="293.4" x2="413.5" y2="427.7" stroke="#0000f8" stroke-width="1"/>
<line x1="424.5" y1="293.4" x2="424.5" y2="427.7" stroke="#0000a6" stroke-width="1"/>
<line x1="434.5" y1="293.4" x2="434.5" y2="427.7" stroke="#0000a6" stroke-width="1"/>
<line x1="445.5" y1="293.4" x2="445.5" y2="427.7" stroke="#0000a6" stroke-width="1"/>
<line x1="455.5" y1="293.4" x2="455.5" y2="427.7" stroke="#0000a6" stroke-width="1"/>
<line x1="45" y1="293.5" x2="466" y2="293.5" stroke="#0000f8" stroke-width="1"/>
<line x1="48" y1="306.5" x2="466" y2="306.5" stroke="#0000a6" stroke-width="1"/>
<line x1="45" y1="320.5" x2="466" y2="320.5" stroke="#0000f8" stroke-width="1"/>
<line x1="48" y1="333.5" x2="466" y2="333.5" stroke="#0000a6" stroke-width="1"/>
<line x1="45" y1="346.5" x2="466" y2="346.5" stroke="#0000f8" stroke-width="1"/>
<line x1="48" y1="360.5" x2="466" y2="360.5" stroke="#0000a6" stroke-width="1"/>
<line x1="45" y1="373.5" x2="466" y2="373.5" stroke="#0000f8" stroke-width="1"/>
<line x1="48" y1="386.5" x2="466" y2="386.5" stroke="#0000a6" stroke-width="1"/>
<line x1="45" y1="400.5" x2="466" y2="400.5" stroke="#0000f8" stroke-width="1"/>
<line x1="48" y1="413.5" x2="466" y2="413.5" stroke="#0000a6" stroke-width="1"/>
<line x1="45" y1="426.5" x2="466" y2="426.5" stroke="#0000f8" stroke-width="1"/>
</g>
<path d="M54 426.7V320.1h1V426.7ZM59 426.7V400.0h1V426.7ZM62 426.7V413.4h1V426.7ZM64 426.7V413.4h1V426.7ZM72 426.7V413.4h1V426.7ZM89 426.7V400.0h1V426.7ZM95 426.7V386.7h1V426.7ZM97 426.7V386.7h1V426.7ZM98 426.7V400.0h1V426.7ZM100 426.7V333.4h1V426.7ZM110 426.7V413.4h1V426.7ZM126 426.7V413.4h1V426.7ZM134 426.7V413.4h1V426.7ZM139 426.7V413.4h1V426.7ZM147 426.7V413.4h1V426.7ZM154 426.7V346.7h1V426.7ZM159 426.7V373.4h1V426.7ZM161 426.7V346.7h1V426.7ZM166 426.7V373.4h1V426.7ZM174 426.7V413.4h1V426.7ZM175 426.7V373.4h1V426.7ZM178 426.7V400.0h1V426.7ZM184 426.7V400.0h1V426.7ZM186 426.7V400.0h1V426.7ZM188 426.7V386.7h1V426.7ZM191 426.7V373.4h1V426.7ZM192 426.7V400.0h1V426.7ZM193 426.7V386.7h1V426.7ZM194 426.7V373.4h1V426.7ZM195 426.7V360.0h1V426.7ZM196 426.7V360.0h1V426.7ZM197 426.7V400.0h1V426.7ZM198 426.7V400.0h1V426.7ZM201 426.7V386.7h1V426.7ZM202 426.7V400.0h1V426.7ZM203 426.7V413.4h1V426.7ZM204 426.7V373.4h1V426.7ZM206 426.7V386.7h1V426.7ZM210 426.7V400.0h1V426.7ZM228 426.7V413.4h1V426.7ZM248 426.7V386.7h1V426.7ZM252 426.7V413.4h1V426.7ZM253 426.7V413.4h1V426.7ZM254 426.7V413.4h1V426.7ZM255 426.7V386.7h1V426.7ZM256 426.7V413.4h1V426.7ZM257 426.7V386.7h1V426.7ZM258 426.7V333.4h1V426.7ZM259 426.7V386.7h1V426.7ZM260 426.7V386.7h1V426.7ZM261 426.7V386.7h1V426.7ZM262 426.7V400.0h1V426.7ZM263 426.7V400.0h1V426.7ZM264 426.7V360.0h1V426.7ZM265 426.7V400.0h1V426.7ZM266 426.7V386.7h1V426.7ZM267 426.7V413.4h1V426.7ZM268 426.7V413.4h1V426.7ZM269 426.7V413.4h1V426.7ZM270 426.7V400.0h1V426.7ZM271 426.7V413.4h1V426.7ZM272 426.7V413.4h1V426.7ZM273 426.7V413.4h1V426.7ZM274 426.7V413.4h1V426.7ZM275 426.7V373.4h1V426.7ZM276 426.7V400.0h1V426.7ZM277 426.7V413.4h1V426.7ZM278 426.7V413.4h1V426.7ZM279 426.7V413.4h1V426.7ZM280 426.7V413.4h1V426.7ZM281 426.7V400.0h1V426.7ZM282 426.7V413.4h1V426.7ZM283 426.7V413.4h1V426.7ZM284 426.7V413.4h1V426.7ZM287 426.7V413.4h1V426.7ZM288 426.7V360.0h1V426.7ZM289 426.7V413.4h1V426.7ZM290 426.7V373.4h1V426.7ZM291 426.7V346.7h1V426.7ZM292 426.7V346.7h1V426.7ZM293 426.7V386.7h1V426.7ZM294 426.7V373.4h1V426.7ZM295 426.7V386.7h1V426.7ZM296 426.7V386.7h1V426.7ZM297 426.7V413.4h1V426.7ZM298 426.7V346.7h1V426.7ZM299 426.7V413.4h1V426.7ZM300 426.7V413.4h1V426.7ZM302 426.7V413.4h1V426.7ZM303 426.7V386.7h1V426.7ZM304 426.7V333.4h1V426.7ZM305 426.7V386.7h1V426.7ZM306 426.7V373.4h1V426.7ZM307 426.7V413.4h1V426.7ZM308 426.7V413.4h1V426.7ZM311 426.7V346.7h1V426.7ZM312 426.7V373.4h1V426.7ZM313 426.7V413.4h1V426.7ZM314 426.7V413.4h1V426.7ZM315 426.7V386.7h1V426.7ZM316 426.7V386.7h1V426.7ZM317 426.7V386.7h1V426.7ZM318 426.7V373.4h1V426.7ZM319 426.7V386.7h1V426.7ZM320 426.7V386.7h1V426.7ZM321 426.7V386.7h1V426.7ZM322 426.7V386.7h1V426.7ZM323 426.7V386.7h1V426.7ZM324 426.7V386.7h1V426.7ZM325 426.7V386.7h1V426.7ZM326 426.7V413.4h1V426.7ZM327 426.7V400.0h1V426.7ZM328 426.7V413.4h1V426.7ZM329 426.7V386.7h1V426.7ZM330 426.7V413.4h1V426.7ZM331 426.7V413.4h1V426.7ZM332 426.7V373.4h1V426.7ZM333 426.7V386.7h1V426.7ZM334 426.7V386.7h1V426.7ZM335 426.7V386.7h1V426.7ZM336 426.7V386.7h1V426.7ZM337 426.7V400.0h1V426.7ZM338 426.7V400.0h1V426.7ZM339 426.7V400.0h1V426.7ZM340 426.7V413.4h1V426.7ZM342 426.7V373.4h1V426.7ZM343 426.7V413.4h1V426.7ZM344 426.7V413.4h1V426.7ZM345 426.7V386.7h1V426.7ZM346 426.7V386.7h1V426.7ZM347 426.7V386.7h1V426.7ZM349 426.7V413.4h1V426.7ZM350 426.7V413.4h1V426.7ZM351 426.7V413.4h1V426.7ZM352 426.7V400.0h1V426.7ZM353 426.7V413.4h1V426.7ZM356 426.7V413.4h1V426.7ZM357 426.7V400.0h1V426.7ZM358 426.7V413.4h1V426.7ZM359 426.7V413.4h1V426.7ZM360 426.7V413.4h1V426.7ZM364 426.7V413.4h1V426.7ZM365 426.7V413.4h1V426.7ZM366 426.7V413.4h1V426.7ZM367 426.7V413.4h1V426.7ZM368 426.7V400.0h1V426.7ZM369 426.7V360.0h1V426.7ZM370 426.7V373.4h1V426.7ZM371 426.7V400.0h1V426.7ZM372 426.7V413.4h1V426.7ZM373 426.7V386.7h1V426.7ZM374 426.7V386.7h1V426.7ZM375 426.7V386.7h1V426.7ZM376 426.7V413.4h1V426.7ZM378 426.7V400.0h1V426.7ZM379 426.7V413.4h1V426.7ZM384 426.7V373.4h1V426.7ZM385 426.7V413.4h1V426.7ZM386 426.7V413.4h1V426.7ZM387 426.7V400.0h1V426.7ZM388 426.7V400.0h1V426.7ZM389 426.7V386.7h1V426.7ZM390 426.7V400.0h1V426.7ZM391 426.7V413.4h1V426.7ZM393 426.7V400.0h1V426.7ZM398 426.7V386.7h1V426.7ZM399 426.7V386.7h1V426.7ZM400 426.7V386.7h1V426.7ZM401 426.7V413.4h1V426.7ZM402 426.7V346.7h1V426.7ZM403 426.7V386.7h1V426.7ZM406 426.7V413.4h1V426.7ZM408 426.7V413.4h1V426.7ZM409 426.7V413.4h1V426.7ZM412 426.7V346.7h1V426.7ZM414 426.7V413.4h1V426.7ZM425 426.7V413.4h1V426.7ZM426 426.7V413.4h1V426.7ZM427 426.7V386.7h1V426.7ZM428 426.7V373.4h1V426.7ZM429 426.7V413.4h1V426.7ZM430 426.7V413.4h1V426.7ZM431 426.7V413.4h1V426.7ZM432 426.7V413.4h1V426.7ZM434 426.7V413.4h1V426.7ZM435 426.7V413.4h1V426.7ZM437 426.7V413.4h1V426.7ZM438 426.7V413.4h1V426.7ZM439 426.7V413.4h1V426.7ZM440 426.7V413.4h1V426.7ZM441 426.7V413.4h1V426.7ZM442 426.7V353.4h1V426.7ZM443 426.7V293.4h1V426.7ZM444 426.7V293.4h1V426.7ZM445 426.7V386.7h1V426.7ZM446 426.7V413.4h1V426.7ZM447 426.7V413.4h1V426.7ZM448 426.7V373.4h1V426.7ZM449 426.7V413.4h1V426.7ZM450 426.7V400.0h1V426.7ZM451 426.7V413.4h1V426.7ZM452 426.7V413.4h1V426.7ZM453 426.7V293.4h1V426.7ZM455 426.7V413.4h1V426.7ZM457 426.7V386.7h1V426.7Z" fill="#2cff00" shape-rendering="crispEdges"/>
<path d="M48.5 370.5L49.3 372.0L50.1 372.8L50.9 373.3L51.7 375.8L52.5 372.1L53.3 371.9L54.1 373.1L54.9 371.9L55.7 372.4L56.5 372.8L57.3 374.1L58.1 374.8L58.9 372.2L59.7 374.3L60.5 371.6L61.3 374.8L62.1 371.5L62.9 371.0L63.7 373.6L64.5 372.6L65.3 374.2L66.1 372.3L66.9 374.8L67.7 372.2L68.5 374.1L69.3 371.3L70.1 376.3L70.9 374.9L71.7 372.5L72.5 370.9L73.3 372.7L74.1 374.3L74.9 373.8L75.7 374.6L76.5 375.7L77.3 373.1L78.1 374.2L78.9 373.2L79.7 371.6L80.5 373.1L81.3 372.4L82.1 374.0L82.9 373.3L83.7 373.2L84.5 371.7L85.3 374.9L86.1 373.6L86.9 373.1L87.7 372.6L88.5 374.7L89.3 374.0L90.1 369.0L90.9 371.3L91.7 373.3L92.5 374.2L93.3 370.4L94.1 373.5L94.9 375.2L95.7 373.3L96.5 376.3L97.3 372.0L98.1 374.5L98.9 373.7L99.7 373.1L100.5 373.2L101.3 376.6L102.1 372.0L102.9 374.0L103.7 373.1L104.5 375.2L105.3 374.2L106.1 374.6L106.9 372.6L107.7 374.2L108.5 373.5L109.3 371.1L110.1 373.2L110.9 374.0L111.7 377.7L112.5 373.4L113.3 376.7L114.1 376.6L114.9 374.7L115.7 372.4L116.5 372.4L117.3 370.8L118.1 372.0L118.9 370.5L119.7 372.8L120.5 371.7L121.3 375.6L122.1 371.0L122.9 371.8L123.7 374.7L124.5 373.2L125.3 374.1L126.1 372.7L126.9 374.3L127.7 373.8L128.5 374.2L129.3 373.1L130.1 374.0L130.9 372.9L131.7 373.0L132.5 371.3L133.3 374.0L134.1 374.4L134.9 373.6L135.7 372.7L136.5 371.9L137.3 373.6L138.1 371.6L138.9 372.8L139.7 371.2L140.5 373.3L141.3 371.1L142.1 373.6L142.9 376.3L143.7 372.4L144.5 373.1L145.3 373.0L146.1 372.7L146.9 373.1L147.7 373.8L148.5 372.7L149.3 373.0L150.1 373.7L150.9 373.3L151.7 372.5L152.5 372.2L153.3 373.1L154.1 376.3L154.9 373.2L155.7 373.0L156.5 374.8L157.3 373.8L158.1 373.7L158.9 374.3L159.7 373.7L160.5 372.9L161.3 374.5L162.1 373.7L162.9 374.1L163.7 375.3L164.5 373.6L165.3 370.2L166.1 373.2L166.9 372.9L167.7 375.8L168.5 373.3L169.3 374.5L170.1 373.3L170.9 374.0L171.7 373.0L172.5 373.5L173.3 373.8L174.1 373.0L174.9 375.9L175.7 375.1L176.5 373.7L177.3 374.5L178.1 374.8L178.9 372.8L179.7 376.2L180.5 371.7L181.3 373.6L182.1 372.4L182.9 372.6L183.7 376.4L184.5 372.1L185.3 373.0L186.1 373.5L186.9 372.1L187.7 374.0L188.5 373.6L189.3 372.7L190.1 373.3L190.9 371.7L191.7 374.1L192.5 373.1L193.3 373.6L194.1 373.8L194.9 374.3L195.7 374.0L196.5 374.0L197.3 372.2L198.1 373.6L198.9 371.9L199.7 372.0L200.5 373.4L201.3 371.7L202.1 372.6L202.9 372.6L203.7 373.0L204.5 372.1L205.3 374.4L206.1 374.2L206.9 373.4L207.7 374.5L208.5 374.1L209.3 372.8L210.1 374.3L210.9 374.0L211.7 372.3L212.5 373.7L213.3 373.7L214.1 369.0L214.9 372.6L215.7 372.4L216.5 371.6L217.3 372.3L218.1 372.0L218.9 372.1L219.7 372.0L220.5 371.7L221.3 374.6L222.1 374.3L222.9 372.7L223.7 374.7L224.5 372.0L225.3 374.4L226.1 372.3L226.9 372.4L227.7 375.7L228.5 372.2L229.3 371.6L230.1 374.7L230.9 373.5L231.7 371.6L232.5 373.3L233.3 370.8L234.1 371.2L234.9 374.3L235.7 371.3L236.5 370.6L237.3 372.1L238.1 371.9L238.9 370.1L239.7 373.6L240.5 377.1L241.3 370.1L242.1 374.3L242.9 371.1L243.7 369.4L244.5 370.9L245.3 371.7L246.1 369.8L246.9 368.6L247.7 371.8L248.5 371.6L249.3 369.1L250.1 364.8L250.9 359.5L251.7 350.8L252.5 351.5L253.3 350.9L254.1 350.5L254.9 352.2L255.7 351.6L256.5 349.9L257.3 355.3L258.1 351.1L258.9 350.8L259.7 351.5L260.5 351.0L261.3 354.4L262.1 349.1L262.9 351.7L263.7 354.4L264.5 351.1L265.3 353.7L266.1 354.1L266.9 352.7L267.7 357.4L268.5 354.1L269.3 352.9L270.1 355.8L270.9 353.1L271.7 352.7L272.5 352.4L273.3 355.1L274.1 355.2L274.9 356.3L275.7 353.0L276.5 353.9L277.3 354.5L278.1 355.7L278.9 354.8L279.7 356.7L280.5 353.5L281.3 355.8L282.1 354.8L282.9 358.4L283.7 355.6L284.5 357.6L285.3 359.0L286.1 356.1L286.9 356.5L287.7 358.8L288.5 357.3L289.3 356.9L290.1 358.4L290.9 356.7L291.7 358.9L292.5 358.3L293.3 359.3L294.1 358.1L294.9 359.0L295.7 358.8L296.5 359.7L297.3 357.7L298.1 358.6L298.9 358.7L299.7 359.1L300.5 358.8L301.3 359.1L302.1 360.3L302.9 359.9L303.7 358.7L304.5 360.5L305.3 357.5L306.1 360.4L306.9 358.7L307.7 359.4L308.5 359.5L309.3 360.5L310.1 362.1L310.9 363.5L311.7 359.7L312.5 361.5L313.3 359.3L314.1 363.6L314.9 361.3L315.7 359.8L316.5 359.9L317.3 359.5L318.1 362.8L318.9 359.7L319.7 360.9L320.5 362.6L321.3 360.7L322.1 361.8L322.9 359.3L323.7 361.6L324.5 361.3L325.3 364.3L326.1 362.4L326.9 363.7L327.7 360.9L328.5 361.0L329.3 359.9L330.1 362.3L330.9 360.8L331.7 359.8L332.5 362.3L333.3 359.8L334.1 363.4L334.9 360.6L335.7 361.0L336.5 362.5L337.3 363.1L338.1 362.6L338.9 362.2L339.7 365.4L340.5 361.3L341.3 361.8L342.1 363.1L342.9 364.3L343.7 362.2L344.5 362.9L345.3 363.3L346.1 363.1L346.9 361.3L347.7 365.0L348.5 363.4L349.3 362.8L350.1 362.1L350.9 363.7L351.7 364.1L352.5 366.2L353.3 362.3L354.1 362.8L354.9 363.9L355.7 362.8L356.5 365.0L357.3 364.4L358.1 365.1L358.9 363.3L359.7 364.2L360.5 363.5L361.3 363.2L362.1 365.3L362.9 365.1L363.7 367.6L364.5 363.2L365.3 363.8L366.1 364.4L366.9 364.5L367.7 364.2L368.5 360.5L369.3 362.4L370.1 366.2L370.9 366.3L371.7 362.2L372.5 363.3L373.3 364.3L374.1 363.3L374.9 363.4L375.7 364.5L376.5 364.2L377.3 365.4L378.1 364.8L378.9 363.1L379.7 363.4L380.5 365.2L381.3 363.5L382.1 366.3L382.9 366.0L383.7 364.4L384.5 364.9L385.3 364.7L386.1 370.9L386.9 363.3L387.7 361.5L388.5 362.6L389.3 364.3L390.1 366.0L390.9 366.0L391.7 364.8L392.5 366.0L393.3 366.9L394.1 365.2L394.9 363.4L395.7 364.6L396.5 364.3L397.3 362.0L398.1 365.4L398.9 363.1L399.7 364.2L400.5 365.8L401.3 365.7L402.1 366.9L402.9 364.8L403.7 364.8L404.5 365.3L405.3 365.6L406.1 365.0L406.9 366.4L407.7 365.9L408.5 365.7L409.3 364.8L410.1 365.9L410.9 365.5L411.7 364.0L412.5 364.4L413.3 366.3L414.1 365.6L414.9 365.9L415.7 366.1L416.5 364.4L417.3 366.8L418.1 362.5L418.9 360.7L419.7 366.2L420.5 365.1L421.3 365.6L422.1 368.2L422.9 365.9L423.7 365.6L424.5 366.4L425.3 363.8L426.1 367.8L426.9 367.7L427.7 365.4L428.5 366.5L429.3 365.8L430.1 368.0L430.9 367.6L431.7 364.5L432.5 364.0L433.3 365.6L434.1 363.9L434.9 364.2L435.7 365.7L436.5 364.9L437.3 364.1L438.1 366.1L438.9 367.4L439.7 366.7L440.5 364.8L441.3 364.4L442.1 366.5L442.9 369.7L443.7 369.5L444.5 369.0L445.3 366.1L446.1 368.9L446.9 365.7L447.7 365.0L448.5 367.7L449.3 367.7L450.1 368.3L450.9 368.6L451.7 369.3L452.5 367.4L453.3 366.0L454.1 368.1L454.9 367.6L455.7 368.1L456.5 368.2" fill="none" stroke="#ff10ff" stroke-width="1.7" stroke-linejoin="round"/>
<line x1="456.5" y1="292.4" x2="456.5" y2="426.7" stroke="#e8e8e8" stroke-width="1.3"/>
</svg>

<!-- Disc info -->
<div class="grp" style="left:491px;top:124px;width:139px;height:84px"></div>
<div class="lg" style="left:498px;top:119px;width:44px"></div>

<!-- Settings -->
<div class="grp" style="left:491px;top:215px;width:139px;height:204px"></div>
<div class="lg" style="left:498px;top:210px;width:42px"></div>
<div class="sunk" style="left:500px;top:225px;width:84px;height:21px"></div>
<div class="btn" style="left:567px;top:227px;width:15px;height:17px"></div>
<svg class="a" style="left:571px;top:234px" width="7" height="4"><path d="M0 0H7L3.5 4Z" fill="#000"/></svg>
<div class="btn" style="left:592px;top:224px;width:23px;height:23px"></div>
<svg class="a" style="left:596px;top:227px" width="14" height="16" viewBox="0 0 14 16">
  <rect x="0.5" y="0.5" width="13" height="15" fill="#fff" stroke="#000" stroke-width="1"/>
  <path d="M3.4 7.2V5.6Q3.4 4.5 4.6 4.5H7" stroke="#008000" stroke-width="1.1" fill="none"/>
  <path d="M6.2 2L9.6 4.4L6.2 6.9Z" fill="#008000"/>
  <path d="M10.7 8V10.2Q10.7 11.2 9.5 11.2H8" stroke="#008000" stroke-width="1.1" fill="none"/>
  <path d="M8 8.6L4.6 11.1L8 13.7Z" fill="#008000"/>
</svg>
<div class="sunk" style="left:554px;top:251px;width:60px;height:20px"></div>
<div class="sunk" style="left:554px;top:274px;width:60px;height:20px"></div>

<div class="chk" style="left:502px;top:296px"></div>
<div class="chk" style="left:502px;top:314px"><svg width="13" height="13" viewBox="0 0 13 13" shape-rendering="crispEdges"><path d="M3 5h1v3h-1zM4 6h1v3h-1zM5 7h1v3h-1zM6 6h1v3h-1zM7 5h1v3h-1zM8 4h1v3h-1zM9 3h1v3h-1z" fill="#000"/></svg></div>
<div class="chk" style="left:502px;top:329px"><svg width="13" height="13" viewBox="0 0 13 13" shape-rendering="crispEdges"><path d="M3 5h1v3h-1zM4 6h1v3h-1zM5 7h1v3h-1zM6 6h1v3h-1zM7 5h1v3h-1zM8 4h1v3h-1zM9 3h1v3h-1z" fill="#000"/></svg></div>
<div class="chk" style="left:502px;top:345px"><svg width="13" height="13" viewBox="0 0 13 13" shape-rendering="crispEdges"><path d="M3 5h1v3h-1zM4 6h1v3h-1zM5 7h1v3h-1zM6 6h1v3h-1zM7 5h1v3h-1zM8 4h1v3h-1zM9 3h1v3h-1z" fill="#000"/></svg></div>
<div class="chk" style="left:502px;top:361px"><svg width="13" height="13" viewBox="0 0 13 13" shape-rendering="crispEdges"><path d="M3 5h1v3h-1zM4 6h1v3h-1zM5 7h1v3h-1zM6 6h1v3h-1zM7 5h1v3h-1zM8 4h1v3h-1zM9 3h1v3h-1z" fill="#000"/></svg></div>
<div class="chk" style="left:502px;top:376px;background:#d6d3ce"><svg width="13" height="13" viewBox="0 0 13 13" shape-rendering="crispEdges"><path d="M3 5h1v3h-1zM4 6h1v3h-1zM5 7h1v3h-1zM6 6h1v3h-1zM7 5h1v3h-1zM8 4h1v3h-1zM9 3h1v3h-1z" fill="#808080"/></svg></div>
<div class="btn" style="left:550px;top:393px;width:75px;height:23px"></div>

<!-- Quality score -->
<div class="grp" style="left:491px;top:425px;width:139px;height:26px"></div>

<!-- Progress -->
<div class="grp" style="left:491px;top:457px;width:139px;height:56px"></div>
<svg class="a" style="left:580px;top:464px" width="42" height="42" viewBox="0 0 42 42">
  <circle cx="20.7" cy="20.5" r="18.6" fill="#b8b5ae" opacity="0.75"/>
  <circle cx="19.8" cy="19.4" r="18.6" fill="#d8d5cf" stroke="#bcb9b2" stroke-width="1.2"/>
  <defs><filter id="wbl" x="-10%" y="-10%" width="120%" height="120%"><feGaussianBlur stdDeviation="0.9"/></filter><clipPath id="wcl"><circle cx="19.8" cy="19.4" r="18.6"/></clipPath></defs>
  <g filter="url(#wbl)" clip-path="url(#wcl)">
  <path d="M19.8 19.4L1.8 14.6A18.6 18.6 0 0 1 9.1 4.2Z" fill="#fff" opacity="0.45"/>
  <path d="M19.8 19.4L9.1 4.2A18.6 18.6 0 0 1 17.2 1.0Z" fill="#fff" opacity="0.18"/>
  <path d="M19.8 19.4L37.8 24.2A18.6 18.6 0 0 1 30.5 34.6Z" fill="#fff" opacity="0.4"/>
  <path d="M19.8 19.4L13.4 36.9A18.6 18.6 0 0 1 1.8 24.2Z" fill="#000" opacity="0.08"/>
  <path d="M19.8 19.4L26.2 1.9A18.6 18.6 0 0 1 37.3 13.0Z" fill="#000" opacity="0.07"/>
  </g>
  <circle cx="19.8" cy="19.4" r="7" fill="#d0cdc6" stroke="#c0bdb6" stroke-width="0.8"/>
  <circle cx="19.8" cy="19.4" r="4.8" fill="#f0eeea"/>
  <circle cx="19.8" cy="19.4" r="2.3" fill="#cbc8c1"/>
</svg>
<div class="a" style="left:561px;top:505.5px;font-size:15.5px;font-weight:bold;color:rgba(255,255,255,0.38);line-height:16px;white-space:nowrap;z-index:6;transform:scaleX(0.70);transform-origin:0 0;will-change:transform;-webkit-text-stroke:0.6px rgba(255,255,255,0.38)">CDRLABS.COM</div>

<!-- PI Errors -->
<div class="grp" style="left:14px;top:457px;width:146px;height:57px"></div>
<div class="lg" style="left:23px;top:452px;width:54px"></div>
<div class="sq" style="left:24px;top:454px;background:#00ffff"></div>

<!-- PI Failures -->
<div class="grp" style="left:172px;top:457px;width:146px;height:57px"></div>
<div class="lg" style="left:181px;top:452px;width:64px"></div>
<div class="sq" style="left:182px;top:454px;background:#ffff00"></div>

<!-- Jitter -->
<div class="grp" style="left:331px;top:457px;width:147px;height:43px"></div>
<div class="lg" style="left:340px;top:452px;width:36px"></div>
<div class="sq" style="left:341px;top:454px;background:#ff00ff"></div>

<div class="t" style="left:22.65px;top:5.00px;font-size:11px;transform:scaleX(1.049);color:#fff;font-weight:bold;">Nero CD-DVD Speed 4.7.5.0</div>
<div class="t" style="left:8.77px;top:24.00px;font-size:11px;transform:scaleX(0.940);-webkit-text-stroke:0.08px;">File</div>
<div class="t" style="left:36.82px;top:24.00px;font-size:11px;-webkit-text-stroke:0.08px;">Run Test</div>
<div class="t" style="left:91.60px;top:24.00px;font-size:11px;transform:scaleX(1.026);-webkit-text-stroke:0.08px;">Extra</div>
<div class="t" style="left:129.87px;top:24.00px;font-size:11px;transform:scaleX(0.944);-webkit-text-stroke:0.08px;">Help</div>
<div class="t" style="left:177.11px;top:56.00px;font-size:11px;transform:scaleX(1.155);-webkit-text-stroke:0.08px;">[0:0]</div>
<div class="t" style="left:209.80px;top:56.00px;font-size:11px;transform:scaleX(0.914);-webkit-text-stroke:0.08px;">BENQ DVD DD DW1640</div>
<div class="t" style="left:323.87px;top:56.00px;font-size:11px;transform:scaleX(0.832);-webkit-text-stroke:0.08px;">BSLB</div>
<div class="t" style="left:498.98px;top:55.00px;font-size:11px;transform:scaleX(1.043);-webkit-text-stroke:0.08px;">Start</div>
<div class="t" style="left:583.02px;top:55.00px;font-size:11px;-webkit-text-stroke:0.08px;">Exit</div>
<div class="t" style="left:17.65px;top:95.00px;font-size:12.5px;transform:scaleX(0.851);">Benchmark</div>
<div class="t" style="left:83.98px;top:95.00px;font-size:12.5px;transform:scaleX(0.831);word-spacing:1.3px;">Create Disc</div>
<div class="t" style="left:150.75px;top:95.00px;font-size:12.5px;transform:scaleX(0.855);word-spacing:1.3px;">Disc Info</div>
<div class="t" style="left:204.67px;top:93.00px;font-size:12.5px;transform:scaleX(0.830);word-spacing:1.3px;z-index:5;">Disc Quality</div>
<div class="t" style="left:273.20px;top:95.00px;font-size:12.5px;transform:scaleX(0.839);word-spacing:1.3px;">Advanced Disc Quality</div>
<div class="t" style="left:393.11px;top:95.00px;font-size:12.5px;transform:scaleX(0.874);">ScanDisc</div>
<div class="t" style="left:499.66px;top:118.00px;font-size:12.5px;transform:scaleX(0.842);word-spacing:1.3px;">Disc info</div>
<div class="t" style="left:500.29px;top:132.00px;font-size:12.5px;transform:scaleX(0.834);">Type:</div>
<div class="t" style="left:544.95px;top:132.00px;font-size:12.5px;transform:scaleX(0.853);word-spacing:1.3px;color:#000080;">DVD+R DL</div>
<div class="t" style="left:498.75px;top:149.00px;font-size:12.5px;transform:scaleX(0.931);">ID:</div>
<div class="t" style="left:544.97px;top:149.00px;font-size:12.5px;transform:scaleX(0.830);word-spacing:1.3px;color:#000080;">MKM 001</div>
<div class="t" style="left:498.90px;top:167.00px;font-size:12.5px;transform:scaleX(0.905);">Date:</div>
<div class="t" style="left:545.44px;top:167.00px;font-size:12.5px;transform:scaleX(0.829);word-spacing:1.3px;color:#000080;">31 May 2007</div>
<div class="t" style="left:498.94px;top:185.00px;font-size:12.5px;transform:scaleX(0.858);">Label:</div>
<div class="t" style="left:544.91px;top:185.00px;font-size:12.5px;transform:scaleX(0.889);color:#000080;">New</div>
<div class="t" style="left:500.22px;top:209.00px;font-size:12.5px;transform:scaleX(0.853);">Settings</div>
<div class="t" style="left:503.99px;top:228.00px;font-size:12.5px;transform:scaleX(0.816);word-spacing:1.3px;">8 X</div>
<div class="t" style="left:502.33px;top:255.00px;font-size:12.5px;transform:scaleX(0.841);">Start:</div>
<div class="t" style="left:557.54px;top:253.00px;font-size:12.5px;transform:scaleX(0.814);word-spacing:1.3px;">0000 MB</div>
<div class="t" style="left:501.93px;top:278.00px;font-size:12.5px;transform:scaleX(0.868);">End:</div>
<div class="t" style="left:557.49px;top:276.00px;font-size:12.5px;transform:scaleX(0.815);word-spacing:1.3px;">8000 MB</div>
<div class="t" style="left:520.21px;top:295.00px;font-size:12.5px;transform:scaleX(0.866);word-spacing:1.3px;">Quick scan</div>
<div class="t" style="left:520.22px;top:313.00px;font-size:12.5px;transform:scaleX(0.852);word-spacing:1.3px;">Show C1/PIE</div>
<div class="t" style="left:520.22px;top:328.00px;font-size:12.5px;transform:scaleX(0.852);word-spacing:1.3px;">Show C2/PIF</div>
<div class="t" style="left:520.24px;top:344.00px;font-size:12.5px;transform:scaleX(0.820);word-spacing:1.3px;">Show jitter</div>
<div class="t" style="left:520.23px;top:360.00px;font-size:12.5px;transform:scaleX(0.838);word-spacing:1.3px;">Show read speed</div>
<div class="t" style="left:520.23px;top:375.00px;font-size:12.5px;transform:scaleX(0.834);word-spacing:1.3px;color:#808080;text-shadow:1px 1px 0 #fff;">Show write speed</div>
<div class="t" style="left:563.30px;top:396.00px;font-size:12.5px;transform:scaleX(0.890);">Advanced</div>
<div class="t" style="left:502.34px;top:431.00px;font-size:12.5px;transform:scaleX(0.826);word-spacing:1.3px;">Quality score:</div>
<div class="t" style="left:608.10px;top:431.00px;font-size:12.5px;transform:scaleX(0.892);color:#000080;">94</div>
<div class="t" style="left:501.67px;top:465.00px;font-size:12.5px;transform:scaleX(0.833);">Progress:</div>
<div class="t" style="left:592.14px;top:465.00px;font-size:12.5px;transform:scaleX(0.814);word-spacing:1.3px;color:#000080;">100 %</div>
<div class="t" style="left:501.66px;top:481.00px;font-size:12.5px;transform:scaleX(0.844);">Position:</div>
<div class="t" style="left:578.48px;top:481.00px;font-size:12.5px;transform:scaleX(0.839);word-spacing:1.3px;color:#000080;">7999 MB</div>
<div class="t" style="left:502.02px;top:496.00px;font-size:12.5px;transform:scaleX(0.862);">Speed:</div>
<div class="t" style="left:590.13px;top:496.00px;font-size:12.5px;transform:scaleX(0.848);word-spacing:1.3px;color:#000080;">3.34 X</div>
<div class="t" style="left:35.21px;top:450.00px;font-size:12.5px;transform:scaleX(0.793);word-spacing:1.3px;">PI Errors</div>
<div class="t" style="left:21.90px;top:466.00px;font-size:12.5px;transform:scaleX(0.850);">Average:</div>
<div class="t" style="left:123.30px;top:466.00px;font-size:12.5px;transform:scaleX(0.854);color:#000080;">14.61</div>
<div class="t" style="left:21.98px;top:481.00px;font-size:12.5px;transform:scaleX(0.819);">Maximum:</div>
<div class="t" style="left:137.90px;top:481.00px;font-size:12.5px;transform:scaleX(0.952);color:#000080;">60</div>
<div class="t" style="left:22.68px;top:496.00px;font-size:12.5px;transform:scaleX(0.898);">Total:</div>
<div class="t" style="left:114.78px;top:496.00px;font-size:12.5px;transform:scaleX(0.872);color:#000080;">467465</div>
<div class="t" style="left:192.68px;top:450.00px;font-size:12.5px;transform:scaleX(0.820);word-spacing:1.3px;">PI Failures</div>
<div class="t" style="left:181.10px;top:466.00px;font-size:12.5px;transform:scaleX(0.852);">Average:</div>
<div class="t" style="left:288.64px;top:466.00px;font-size:12.5px;transform:scaleX(0.824);color:#000080;">0.01</div>
<div class="t" style="left:181.09px;top:481.00px;font-size:12.5px;transform:scaleX(0.812);">Maximum:</div>
<div class="t" style="left:298.80px;top:481.00px;font-size:12.5px;transform:scaleX(0.752);color:#000080;">10</div>
<div class="t" style="left:181.68px;top:496.00px;font-size:12.5px;transform:scaleX(0.888);">Total:</div>
<div class="t" style="left:285.63px;top:496.00px;font-size:12.5px;transform:scaleX(0.852);color:#000080;">3336</div>
<div class="t" style="left:352.15px;top:450.00px;font-size:12.5px;transform:scaleX(0.807);">Jitter</div>
<div class="t" style="left:339.90px;top:466.00px;font-size:12.5px;transform:scaleX(0.861);">Average:</div>
<div class="t" style="left:436.20px;top:466.00px;font-size:12.5px;transform:scaleX(0.804);word-spacing:1.3px;color:#000080;">8.64 %</div>
<div class="t" style="left:339.98px;top:481.00px;font-size:12.5px;transform:scaleX(0.819);">Maximum:</div>
<div class="t" style="left:436.43px;top:481.00px;font-size:12.5px;transform:scaleX(0.817);word-spacing:1.3px;color:#000080;">11.6 %</div>
<div class="t" style="left:339.58px;top:500.00px;font-size:12.5px;transform:scaleX(0.819);word-spacing:1.3px;">PO failures:</div>
<div class="t" style="left:462.41px;top:500.00px;font-size:12.5px;transform:scaleX(0.891);color:#000080;">0</div>
<div class="t" style="left:23.38px;top:122.00px;font-size:12.5px;transform:scaleX(0.860);">100</div>
<div class="t" style="left:29.34px;top:149.00px;font-size:12.5px;transform:scaleX(0.860);">80</div>
<div class="t" style="left:29.34px;top:175.00px;font-size:12.5px;transform:scaleX(0.860);">60</div>
<div class="t" style="left:29.34px;top:202.00px;font-size:12.5px;transform:scaleX(0.860);">40</div>
<div class="t" style="left:29.34px;top:229.00px;font-size:12.5px;transform:scaleX(0.860);">20</div>
<div class="t" style="left:471.09px;top:231.00px;font-size:12.5px;transform:scaleX(0.860);">4</div>
<div class="t" style="left:470.87px;top:207.00px;font-size:12.5px;transform:scaleX(0.860);">8</div>
<div class="t" style="left:470.49px;top:183.00px;font-size:12.5px;transform:scaleX(0.860);">12</div>
<div class="t" style="left:470.49px;top:159.00px;font-size:12.5px;transform:scaleX(0.860);">16</div>
<div class="t" style="left:470.76px;top:135.00px;font-size:12.5px;transform:scaleX(0.860);">20</div>
<div class="t" style="left:29.34px;top:284.00px;font-size:12.5px;transform:scaleX(0.860);">10</div>
<div class="t" style="left:35.36px;top:311.00px;font-size:12.5px;transform:scaleX(0.860);">8</div>
<div class="t" style="left:35.36px;top:337.00px;font-size:12.5px;transform:scaleX(0.860);">6</div>
<div class="t" style="left:35.20px;top:364.00px;font-size:12.5px;transform:scaleX(0.860);">4</div>
<div class="t" style="left:35.42px;top:391.00px;font-size:12.5px;transform:scaleX(0.860);">2</div>
<div class="t" style="left:470.76px;top:284.00px;font-size:12.5px;transform:scaleX(0.860);">20</div>
<div class="t" style="left:470.49px;top:311.00px;font-size:12.5px;transform:scaleX(0.860);">16</div>
<div class="t" style="left:470.49px;top:337.00px;font-size:12.5px;transform:scaleX(0.860);">12</div>
<div class="t" style="left:470.87px;top:364.00px;font-size:12.5px;transform:scaleX(0.860);">8</div>
<div class="t" style="left:471.09px;top:391.00px;font-size:12.5px;transform:scaleX(0.860);">4</div>
<div class="t" style="left:41.93px;top:266.00px;font-size:12.5px;transform:scaleX(0.860);">0.0</div>
<div class="t" style="left:94.01px;top:266.00px;font-size:12.5px;transform:scaleX(0.860);">1.0</div>
<div class="t" style="left:146.45px;top:266.00px;font-size:12.5px;transform:scaleX(0.860);">2.0</div>
<div class="t" style="left:198.83px;top:266.00px;font-size:12.5px;transform:scaleX(0.860);">3.0</div>
<div class="t" style="left:251.21px;top:266.00px;font-size:12.5px;transform:scaleX(0.860);">4.0</div>
<div class="t" style="left:303.40px;top:266.00px;font-size:12.5px;transform:scaleX(0.860);">5.0</div>
<div class="t" style="left:355.65px;top:266.00px;font-size:12.5px;transform:scaleX(0.860);">6.0</div>
<div class="t" style="left:407.95px;top:266.00px;font-size:12.5px;transform:scaleX(0.860);">7.0</div>
<div class="t" style="left:460.30px;top:266.00px;font-size:12.5px;transform:scaleX(0.860);">8.0</div>
<div class="t" style="left:41.93px;top:428.00px;font-size:12.5px;transform:scaleX(0.860);">0.0</div>
<div class="t" style="left:94.01px;top:428.00px;font-size:12.5px;transform:scaleX(0.860);">1.0</div>
<div class="t" style="left:146.45px;top:428.00px;font-size:12.5px;transform:scaleX(0.860);">2.0</div>
<div class="t" style="left:198.83px;top:428.00px;font-size:12.5px;transform:scaleX(0.860);">3.0</div>
<div class="t" style="left:251.21px;top:428.00px;font-size:12.5px;transform:scaleX(0.860);">4.0</div>
<div class="t" style="left:303.40px;top:428.00px;font-size:12.5px;transform:scaleX(0.860);">5.0</div>
<div class="t" style="left:355.65px;top:428.00px;font-size:12.5px;transform:scaleX(0.860);">6.0</div>
<div class="t" style="left:407.95px;top:428.00px;font-size:12.5px;transform:scaleX(0.860);">7.0</div>
<div class="t" style="left:460.30px;top:428.00px;font-size:12.5px;transform:scaleX(0.860);">8.0</div>

</body>
</html>
